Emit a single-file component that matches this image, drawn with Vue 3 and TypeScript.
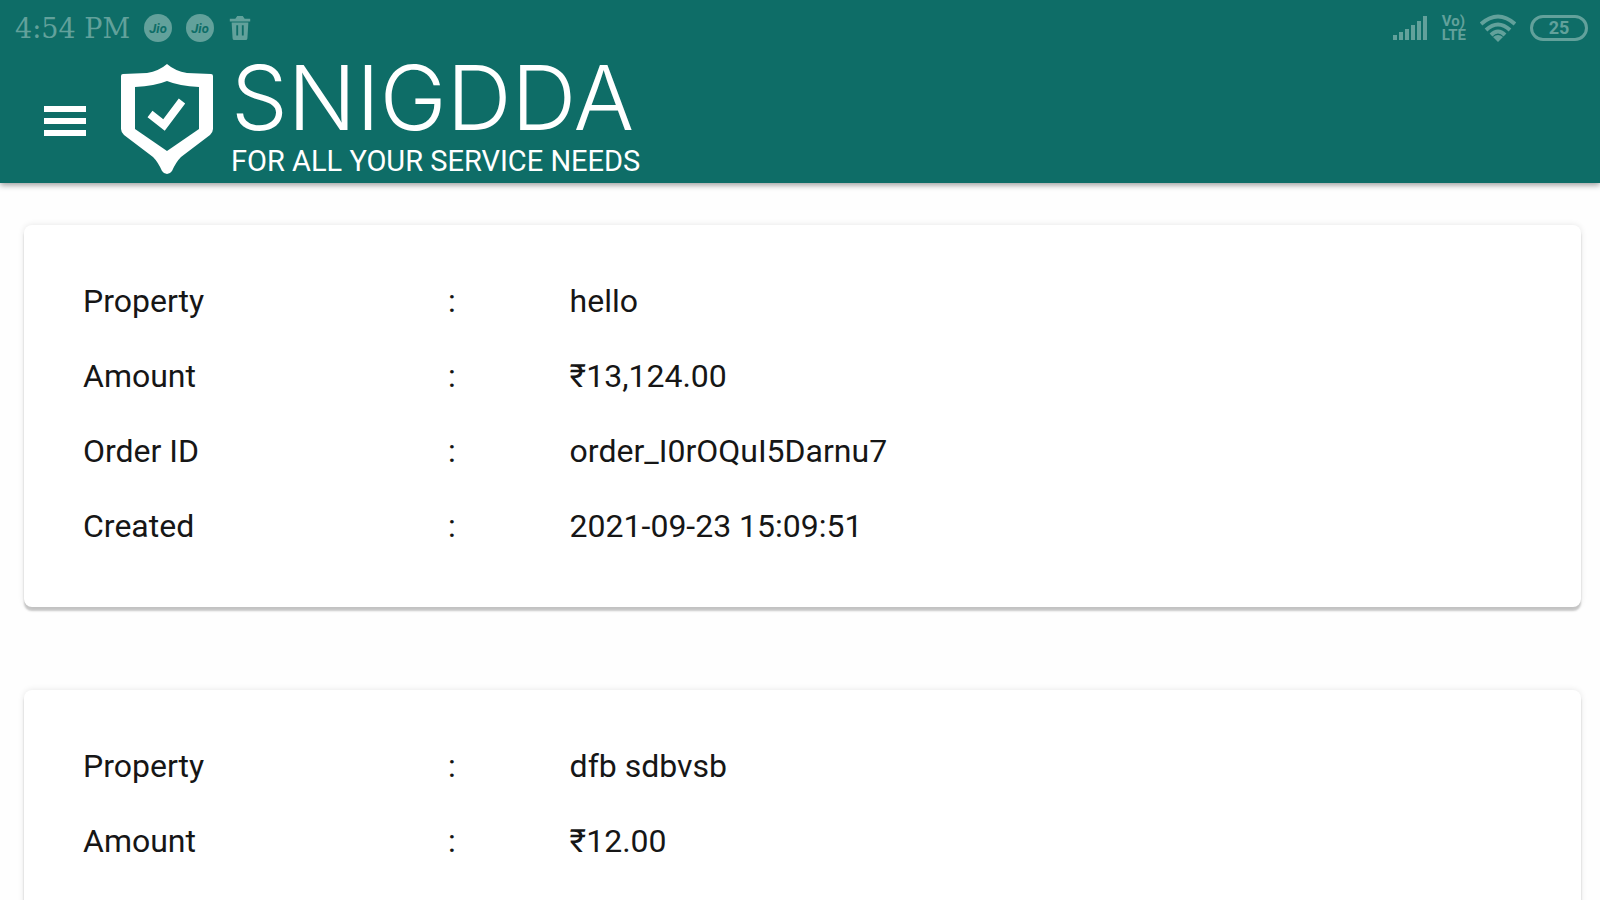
<script setup lang="ts">
interface Field {
  label: string
  value: string
}

interface Order {
  id: number
  fields: Field[]
}

const orders: Order[] = [
  {
    id: 1,
    fields: [
      { label: 'Property', value: 'hello' },
      { label: 'Amount', value: '₹13,124.00' },
      { label: 'Order ID', value: 'order_I0rOQuI5Darnu7' },
      { label: 'Created', value: '2021-09-23 15:09:51' },
    ],
  },
  {
    id: 2,
    fields: [
      { label: 'Property', value: 'dfb sdbvsb' },
      { label: 'Amount', value: '₹12.00' },
    ],
  },
]
</script>

<template>
  <div class="app">
    <header class="header">
      <div class="status">
        <div class="status-side">
          <span class="clock">4:54 PM</span>
          <span v-for="n in 2" :key="n" class="jio">Jio</span>
          <svg class="trash" viewBox="0 0 24 28" aria-hidden="true">
            <path d="M1 4h6l2-3h6l2 3h6v3H1zM3 8h18l-1 17q0 2-2 2H6q-2 0-2-2z" fill="currentColor" />
            <path d="M9 11v11M15 11v11" stroke="#0e6d67" stroke-width="2" />
          </svg>
        </div>
        <div class="status-side">
          <svg class="signal" viewBox="0 0 36 26" aria-hidden="true">
            <path d="M3 25v-5M9 25v-8M15 25V14M21 25V10M27 25V6M33 25V1" stroke="currentColor" stroke-width="4" />
          </svg>
          <span class="volte"><span>Vo)</span><span>LTE</span></span>
          <svg class="wifi" viewBox="0 0 36 28" aria-hidden="true">
            <g fill="none" stroke="currentColor" stroke-width="4">
              <path d="M1 10Q18-5 35 10" />
              <path d="M6 16Q18 5 30 16" />
              <path d="M11 21Q18 14 25 21" />
            </g>
            <path d="M13 23q5-4 10 0l-5 5z" fill="currentColor" />
          </svg>
          <span class="battery">25</span>
        </div>
      </div>
      <div class="bar">
        <button class="menu" type="button" aria-label="Menu">
          <svg viewBox="0 0 42 32" aria-hidden="true">
            <path d="M0 4h42M0 16h42M0 28h42" stroke="currentColor" stroke-width="6" />
          </svg>
        </button>
        <a class="brand" href="#">
          <svg class="shield" viewBox="0 0 92 110" aria-hidden="true">
            <path
              fill="currentColor"
              fill-rule="evenodd"
              d="M46 0Q54 7 66 9L90 10Q92 10 92 12V65Q92 68 89 71L60 93Q55 98 51 107Q49 110 46 110Q43 110 41 107Q37 98 32 93L3 71Q0 68 0 65V12Q0 10 2 10L26 9Q38 7 46 0ZM46 17Q34 22 14 23V65L46 87L78 65V23Q58 22 46 17Z"
            />
            <path d="M29 50L43 61L61 37" fill="none" stroke="currentColor" stroke-width="8" />
          </svg>
          <span class="words">
            <span class="name">SNIGDDA</span>
            <span class="tagline">FOR ALL YOUR SERVICE NEEDS</span>
          </span>
        </a>
      </div>
    </header>

    <main class="orders">
      <section v-for="order in orders" :key="order.id" class="card">
        <table class="fields">
          <colgroup>
            <col class="col-label" />
            <col class="col-colon" />
            <col />
          </colgroup>
          <tbody>
            <tr v-for="field in order.fields" :key="field.label">
              <th scope="row">{{ field.label }}</th>
              <td>:</td>
              <td>{{ field.value }}</td>
            </tr>
          </tbody>
        </table>
      </section>
    </main>
  </div>
</template>

<style>
body {
  margin: 0;
  background: #fefefe;
}
</style>

<style scoped>
.app {
  display: flex;
  flex-direction: column;
  height: 100vh;
  overflow: hidden;
  font-family: Roboto, 'Liberation Sans', sans-serif;
  color: #161616;
}

.header {
  flex: none;
  padding-bottom: 3px;
  background: #0e6d67;
  color: #fff;
  box-shadow: 0 2px 6px rgba(0, 0, 0, 0.4);
}

.status {
  display: flex;
  justify-content: space-between;
  align-items: center;
  height: 56px;
  padding: 0 12px 0 15px;
  color: #62a19b;
}

.status-side {
  display: flex;
  align-items: center;
  gap: 14px;
}

.clock {
  font: 27px 'DejaVu Serif', serif;
}

.jio {
  display: grid;
  place-items: center;
  width: 28px;
  height: 28px;
  border-radius: 50%;
  background: #62a19b;
  color: #0e6d67;
  font-size: 13px;
  font-style: italic;
  font-weight: 700;
}

.trash {
  width: 24px;
  height: 26px;
}

.signal {
  width: 36px;
  height: 26px;
}

.volte {
  display: flex;
  flex-direction: column;
  font-size: 15px;
  line-height: 14px;
  font-weight: 700;
}

.wifi {
  width: 36px;
  height: 28px;
}

.battery {
  box-sizing: border-box;
  width: 58px;
  height: 26px;
  border: 3px solid currentColor;
  border-radius: 13px;
  font-size: 18px;
  line-height: 20px;
  font-weight: 700;
  text-align: center;
}

.bar {
  display: flex;
  align-items: center;
  gap: 35px;
  padding: 6px 44px 0;
}

.menu {
  display: flex;
  padding: 0;
  border: 0;
  background: none;
  color: #fff;
}

.menu svg {
  width: 42px;
  height: 32px;
}

.brand {
  display: flex;
  align-items: flex-start;
  gap: 18px;
  color: #fff;
  text-decoration: none;
}

.shield {
  width: 92px;
  height: 110px;
  padding-top: 2px;
}

.words {
  display: flex;
  flex-direction: column;
  gap: 8px;
  white-space: nowrap;
}

.name {
  font-family: Inter, sans-serif;
  font-size: 90px;
  line-height: 72px;
  font-weight: 300;
}

.tagline {
  font-size: 29px;
  line-height: 38px;
}

.orders {
  flex: 1;
  min-height: 0;
  overflow: hidden;
  display: flex;
  flex-direction: column;
  gap: 83px;
  padding: 42px 19px 0 24px;
}

.card {
  flex: none;
  padding: 38px 38px 44px 59px;
  border-radius: 8px;
  background: #fff;
  box-shadow: 0 4px 2px rgba(0, 0, 0, 0.2), 0 0 6px rgba(0, 0, 0, 0.1);
}

.fields {
  width: 100%;
  table-layout: fixed;
  border-collapse: collapse;
  font-size: 32px;
  line-height: 40px;
}

.col-label {
  width: 25%;
}

.col-colon {
  width: 8.33%;
}

.fields tr {
  height: 75px;
}

.fields th,
.fields td {
  padding: 0;
  font-weight: 400;
  text-align: left;
}
</style>
